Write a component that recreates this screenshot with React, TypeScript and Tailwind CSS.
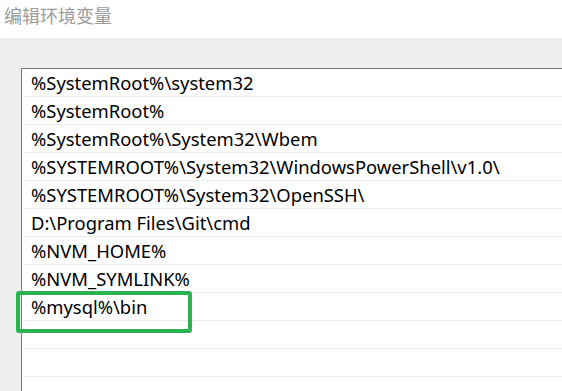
import React from "react";

const rows = [
  "%SystemRoot%\\system32",
  "%SystemRoot%",
  "%SystemRoot%\\System32\\Wbem",
  "%SYSTEMROOT%\\System32\\WindowsPowerShell\\v1.0\\",
  "%SYSTEMROOT%\\System32\\OpenSSH\\",
  "D:\\Program Files\\Git\\cmd",
  "%NVM_HOME%",
  "%NVM_SYMLINK%",
  "%mysql%\\bin",
  "",
  "",
  "",
];

export default function App() {
  return (
    <div
      className="w-[562px] h-[391px] overflow-hidden flex flex-col bg-[#efefef]"
      style={{ fontFamily: '"Noto Sans", "Noto Sans CJK SC", sans-serif' }}
    >
      <div className="h-[38px] bg-white shrink-0 flex items-start pl-[4px] pt-[3px]">
        <span
          className="text-[18px] leading-[24px] text-[#9a9a9a]"
          style={{ fontFamily: '"Noto Sans CJK SC", sans-serif' }}
        >
          编辑环境变量
        </span>
      </div>
      <div className="flex-1 pl-[21px] pt-[30px]">
        <div className="relative w-[560px] h-[400px] bg-white border-l border-t border-[#7a7a7a]">
          <div className="flex flex-col pl-[1px]">
            {rows.map((r, i) => (
              <div
                key={i}
                className="h-[28px] border-b border-[#ebebeb] flex items-center pl-[8px] text-[18.4px] text-black whitespace-nowrap"
              >
                {r}
              </div>
            ))}
          </div>
          <div className="absolute left-[-6px] top-[222px] w-[176px] h-[42px] border-[4px] border-[#2bb34f] rounded-[3px]" />
        </div>
      </div>
    </div>
  );
}
